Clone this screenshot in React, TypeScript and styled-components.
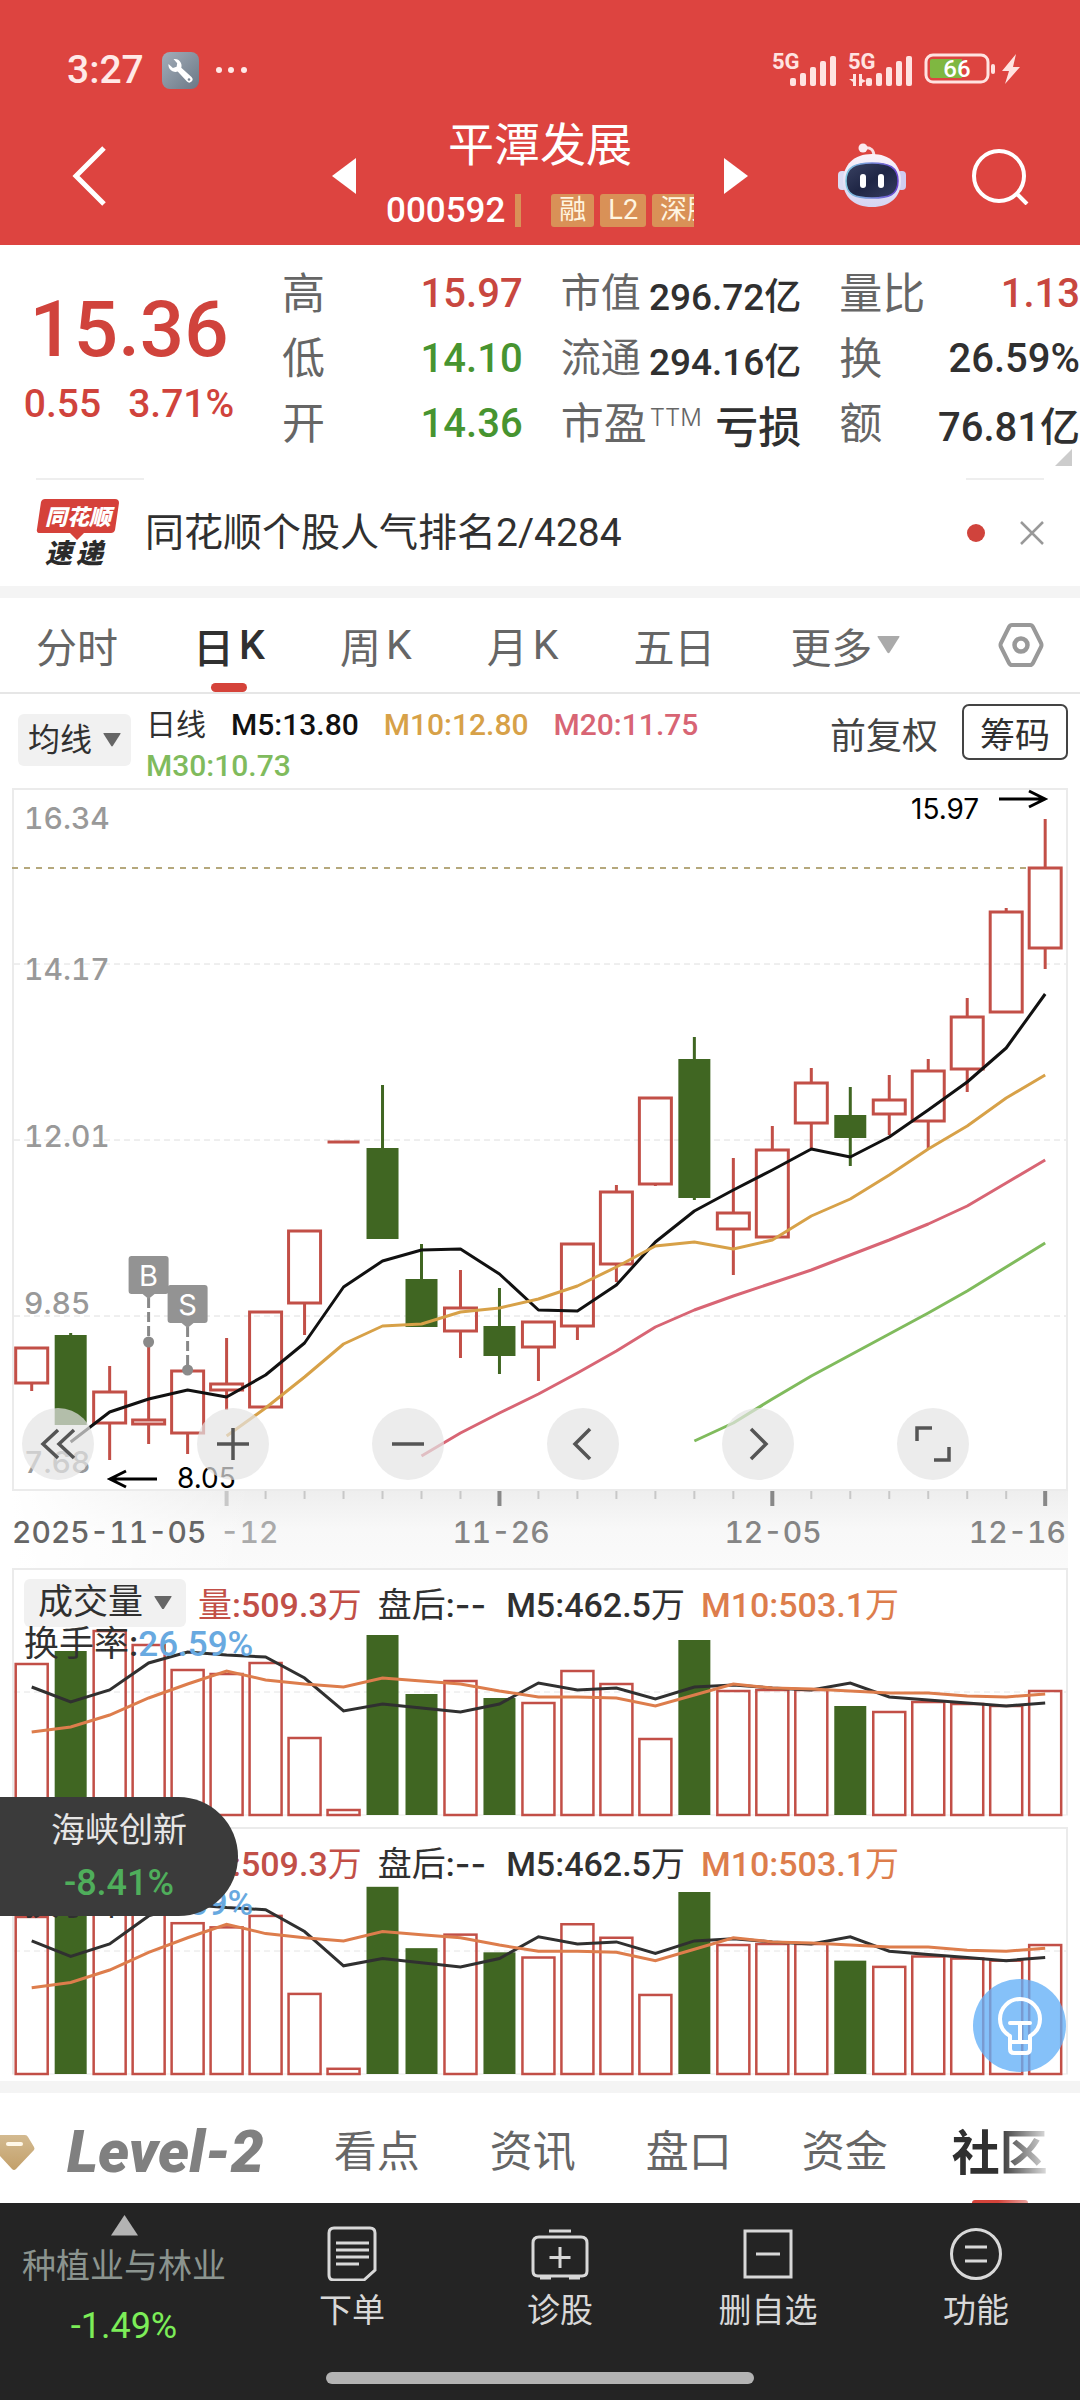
import React from "react";
import styled, { createGlobalStyle } from "styled-components";

const FONT = 'Roboto, "Noto Sans CJK SC", sans-serif';
const WIDE = 'Inter, "Noto Sans CJK SC", sans-serif';
const RED = "#d0433c";
const UP = "#c24f47";
const DOWN = "#406622";

const Global = createGlobalStyle`
  * { box-sizing: border-box; }
  body { margin: 0; background: #fff; font-family: ${FONT}; color: #303030; }
  button, select { font: inherit; color: inherit; background: none; border: 0; padding: 0; margin: 0; cursor: pointer; }
  h1, p, dl, dd, dt { margin: 0; font-weight: inherit; }
  svg { display: block; flex: none; }
`;

/* ---------- header ---------- */
const Header = styled.header`background: #dd4440; color: #fff; padding-bottom: 4px;`;
const StatusBar = styled.div`
  display: flex; align-items: center; height: 110px; padding: 30px 58px 0 67px; color: #ffe9e7;
`;
const Clock = styled.span`font-size: 39px; line-height: 48px; font-weight: 500; margin-right: 18px;`;
const Spacer = styled.span`flex: 1;`;
const StatusIcons = styled.div`display: flex; align-items: center; gap: 12px;`;
const StatusSvg = styled.svg`overflow: visible;`;

const NavBar = styled.nav`
  display: grid; grid-template-columns: 1fr 416px 1fr; align-items: center; height: 131px;
`;
const IconButton = styled.button`display: grid; place-items: center;`;
const NavLeft = styled.div`display: flex; padding-left: 71px;`;
const NavRight = styled.div`display: flex; justify-content: flex-end; align-items: center; gap: 64px; padding-right: 51px;`;
const TitleRow = styled.div`display: flex; align-items: center; justify-content: space-between;`;
const TitleBlock = styled.div`display: flex; flex-direction: column; align-items: center; width: 308px; overflow: hidden;`;
const StockName = styled.h1`font-size: 46px; line-height: 70px; font-weight: 400;`;
const CodeRow = styled.div`
  display: flex; align-items: center; gap: 6px; width: 100%; height: 61px; overflow: hidden; white-space: nowrap;
`;
const Code = styled.span`font-size: 35px; line-height: 40px; font-weight: 500; margin-right: 4px;`;
const Tag = styled.span`
  flex: none; padding: 0 8px; border-radius: 3px; background: #d99157; color: #fff5e0; font-size: 27px; line-height: 33px;
`;
const TagBar = styled.span`flex: none; width: 6px; height: 33px; margin-right: 24px; background: #d99157;`;

/* ---------- quote ---------- */
const Quote = styled.section`
  position: relative; display: grid; grid-template-columns: 244px repeat(3, 1fr); column-gap: 38px; padding: 16px 0 22px;
`;
const PriceBlock = styled.div`
  display: flex; flex-direction: column; align-items: center; padding: 31px 0 0 14px; color: ${RED}; font-weight: 500;
`;
const Price = styled.p`font-size: 78px; line-height: 76px;`;
const Change = styled.p`display: flex; gap: 27px; font-size: 39px; line-height: 48px; margin-top: 12px;`;
const Stats = styled.dl`display: block;`;
const Stat = styled.div`display: flex; align-items: center; justify-content: space-between; height: 65px; white-space: nowrap;`;
const StatLabel = styled.dt<{ $small?: boolean }>`
  display: flex; font-size: ${p => (p.$small ? 40 : 43)}px; line-height: 60px; color: #666;
`;
const Ttm = styled.sup`font-family: ${WIDE}; font-size: 24px; line-height: 48px; font-weight: 300; margin-left: 3px; vertical-align: top;`;
const StatValue = styled.dd<{ $tone?: string; $size?: number }>`
  font-size: ${p => p.$size || 40}px; font-weight: 500; color: ${p => p.$tone || "#303030"};
`;
const Corner = styled.span`
  position: absolute; right: 8px; bottom: 12px; width: 17px; height: 17px;
  background: #ccc; clip-path: polygon(100% 0, 100% 100%, 0 100%);
`;

/* ---------- news ---------- */
const NewsLines = styled.div`
  display: flex; justify-content: space-between; padding: 0 36px;
  &::before, &::after { content: ""; height: 2px; background: #eee; }
  &::before { width: 108px; }
  &::after { width: 78px; }
`;
const News = styled.section`display: flex; align-items: center; height: 106px; padding: 0 36px;`;
const NewsText = styled.a`flex: 1; margin-left: 25px; font-size: 39px; line-height: 48px; color: #303030; text-decoration: none;`;
const Dot = styled.span`width: 18px; height: 18px; border-radius: 50%; background: ${RED}; margin-right: 35px;`;
const Strip = styled.div`height: 12px; background: #f4f4f4;`;

/* ---------- period tabs ---------- */
const PeriodTabs = styled.nav`
  display: flex; align-items: center; gap: 75px; height: 96px; padding: 0 36px; border-bottom: 2px solid #e6e6e6;
`;
const PeriodTab = styled.button<{ $active?: boolean }>`
  display: flex; align-items: center; justify-content: center; gap: 5px; align-self: stretch; position: relative;
  font-size: 41px; color: ${p => (p.$active ? "#303030" : "#666")}; font-weight: ${p => (p.$active ? 500 : 400)};
  &::after {
    content: ""; display: ${p => (p.$active ? "block" : "none")}; position: absolute; bottom: 0; width: 36px; height: 9px;
    border-radius: 5px; background: #d5433a;
  }
`;
const Push = styled.div`margin-left: auto;`;

/* ---------- legend ---------- */
const Legend = styled.div`display: flex; align-items: flex-start; padding: 10px 12px 8px 18px; height: 94px;`;
const Picker = styled.label<{ $large?: boolean }>`
  display: flex; align-items: center; gap: 10px; border-radius: 6px; background: #f1f1f1;
  height: ${p => (p.$large ? 48 : 52)}px; padding: ${p => (p.$large ? "0 14px" : "0 10px")};
  margin-top: ${p => (p.$large ? 0 : 10)}px; font-size: ${p => (p.$large ? 35 : 32)}px;
  select { appearance: none; line-height: 44px; }
`;
const Averages = styled.p`
  flex: 1; display: flex; flex-wrap: wrap; column-gap: 25px; margin-left: 15px; font-size: 30px; line-height: 41px; font-weight: 500;
`;
const Tone = styled.span<{ $c: string }>`color: ${p => p.$c};`;
const PlainButton = styled.button`margin: 9px 24px 0 0; font-size: 36px; line-height: 48px; color: #444;`;
const BoxButton = styled.button`height: 56px; padding: 0 16px; border: 2px solid #444; border-radius: 7px; font-size: 35px;`;

/* ---------- charts ---------- */
const Charts = styled.main`position: relative; padding: 0 12px 5px;`;
const Stack = styled.section<{ $gap?: number }>`
  display: grid; margin-top: ${p => p.$gap || 0}px;
  > * { grid-area: 1 / 1; }
  svg { width: 100%; height: auto; }
`;
const ChartTools = styled.div`display: flex; align-items: flex-start; gap: 103px; padding: 620px 0 0 10px;`;
const RoundButton = styled.button`
  display: grid; place-items: center; width: 72px; height: 72px; border-radius: 50%; background: rgba(228, 228, 228, 0.7);
  svg { width: 40px; height: 40px; }
`;
const VolumeInfo = styled.div`padding: 10px 12px 0; font-size: 34px; font-weight: 500;`;
const VolumeRow = styled.div`
  display: flex; align-items: center; white-space: nowrap; font-weight: 500;
  label { font-weight: 400; margin-right: 12px; svg { width: 18px; } }
`;
const Figure = styled.span<{ $c: string; $gap?: number }>`color: ${p => p.$c}; margin-right: ${p => p.$gap || 0}px; font-weight: 500;`;
const Cjk = styled.span`font-weight: 400;`;
const Dashes = styled.span`font-family: ${WIDE};`;
const Turnover = styled.p`line-height: 36px; font-size: 35px;`;

const FloatingStock = styled.a`
  position: absolute; left: 0; top: 1009px; width: 238px; height: 119px; padding-top: 7px;
  display: flex; flex-direction: column; align-items: center;
  border-radius: 0 60px 60px 0; background: #3b3b3b; color: #e6e6e6; text-decoration: none;
  font-size: 34px; line-height: 53px;
`;
const FloatingChange = styled.span`font-size: 36px; font-weight: 500; color: #4fae5b;`;
const Bulb = styled.button`
  position: absolute; right: 14px; bottom: 9px; width: 93px; height: 93px; border-radius: 50%;
  display: grid; place-items: center; background: rgba(99, 175, 247, 0.78);
`;

/* ---------- info tabs ---------- */
const InfoTabs = styled.nav`
  display: flex; align-items: center; gap: 70px; height: 110px; padding-top: 8px; overflow: hidden; white-space: nowrap;
`;
const LevelTab = styled.button`
  display: flex; align-items: center; gap: 32px; color: #808080; font-size: 59px; font-weight: 900; font-style: italic; line-height: 60px;
`;
const InfoTab = styled.button`font-size: 43px; line-height: 56px; color: #666;`;
const ActiveInfo = styled.button`
  align-self: stretch; display: flex; flex-direction: column; align-items: center; justify-content: space-between; margin-left: -6px;
  font-size: 48px; line-height: 70px; font-weight: 700; padding-top: 18px;
  mask-image: linear-gradient(90deg, #000 48%, rgba(0, 0, 0, 0.15) 100%);
  &::after { content: ""; width: 56px; height: 3px; border-radius: 6px 6px 0 0; background: #d5433a; }
`;

/* ---------- bottom bar ---------- */
const Footer = styled.footer`background: #242424; color: #d8d8d8;`;
const Actions = styled.div`display: grid; grid-template-columns: 248px repeat(4, 1fr); height: 169px;`;
const Sector = styled.a`
  display: flex; flex-direction: column; align-items: center; padding-top: 12px; color: #8b948f; text-decoration: none;
  font-size: 34px; line-height: 40px;
`;
const SectorName = styled.span`margin: 10px 0 20px;`;
const SectorChange = styled.span`font-size: 36px; color: #7ced58;`;
const Action = styled.button`
  display: flex; flex-direction: column; align-items: center; gap: 10px; padding-top: 22px; font-size: 33px; line-height: 40px;
`;
const HomeBar = styled.div`width: 428px; height: 12px; margin: 0 auto; border-radius: 6px; background: #b3b3b3;`;
const Bottom = styled.div`height: 28px; padding-bottom: 16px;`;

/* ---------- data ---------- */
type Candle = [number, number, number, number, boolean?];
const CANDLES: Candle[] = [
  [560, 560, 595, 603], [545, 547, 637, 637, true], [578, 604, 635, 672], [554, 632, 636, 656], [582, 583, 645, 666],
  [550, 596, 602, 622], [523, 524, 619, 619], [443, 443, 515, 547], [354, 354, 354, 354], [297, 360, 451, 451, true],
  [456, 491, 539, 539, true], [482, 520, 543, 570], [500, 538, 568, 586, true], [534, 534, 559, 593], [456, 456, 538, 552],
  [397, 404, 476, 494], [310, 310, 396, 398], [249, 271, 410, 412, true], [370, 425, 441, 487], [338, 362, 449, 449],
  [280, 295, 335, 360], [299, 327, 350, 378, true], [287, 312, 326, 347], [271, 283, 333, 361], [210, 229, 281, 304],
  [120, 124, 224, 225], [31, 80, 160, 181],
];
const LINES = [
  { from: 1, c: "#111", v: [654, 624, 611, 602, 609, 587, 555, 499, 473, 462, 461, 486, 522, 523, 497, 454, 423, 402, 382, 361, 369, 349, 322, 294, 260, 206] },
  { from: 5, c: "#d7a148", v: [648, 620, 589, 556, 538, 536, 524, 520, 511, 498, 479, 458, 454, 461, 452, 428, 411, 387, 361, 338, 310, 287] },
  { from: 10, c: "#d86574", v: [668, 645, 625, 606, 585, 563, 539, 522, 508, 495, 482, 467, 452, 436, 418, 395, 372] },
  { from: 17, c: "#80bb5d", v: [653, 635, 611, 588, 567, 546, 525, 503, 479, 455] },
];
const VOLUME = [96, 83, 63, 77, 102, 106, 95, 170, 242, 67, 126, 113, 130, 135, 103, 116, 171, 72, 123, 122, 122, 138, 144, 134, 136, 138, 123];
const VOL5 = [119, 134, 122, 95, 84, 87, 89, 110, 143, 136, 140, 144, 136, 115, 122, 120, 131, 119, 117, 120, 122, 115, 129, 132, 135, 138, 135];
const VOL10 = [164, 159, 147, 130, 116, 103, 112, 116, 119, 110, 113, 116, 123, 129, 129, 130, 138, 127, 116, 120, 121, 123, 125, 125, 128, 129, 126];
const cx = (i: number) => 19.7 + 38.98 * i;
const points = (v: number[], from = 0) => v.map((y, i) => `${cx(i + from)},${y}`).join(" ");

const Triangle = ({ w = 18, c = "#666", d = "down" }: { w?: number; c?: string; d?: string }) => (
  <svg width={w} height={w * 0.76} viewBox="0 0 20 16" preserveAspectRatio="none" aria-hidden="true">
    <path d={d === "down" ? "M1 0h18q1 0 .5 1L11 15q-1 1.500-2 0L.5 1Q0 0 1 0z" : "M0 16L10 0l10 16z"} fill={c} />
  </svg>
);

const Signal = ({ data }: { data?: boolean }) => (
  <StatusSvg width="64" height="36" viewBox="0 0 64 36" aria-hidden="true" fill="#ffe3e1">
    <text x="0" y="17" fontSize="22" fontWeight="700" fontFamily="Roboto, sans-serif">5G</text>
    {[8, 13, 19, 25, 30].map((h, i) => <rect key={i} x={18 + i * 10} y={34 - h} width="6" height={h} rx="2" />)}
    {data && <path d="M8 22v12H5v-4l-4-3h4v-5zM11 22h3v5l4 2-4 2v3h-3z" />}
  </StatusSvg>
);

const Wrench = () => (
  <svg width="37" height="37" viewBox="0 0 37 37" aria-hidden="true">
    <defs><linearGradient id="tool" x1="0" y1="0" x2="1" y2="1"><stop offset="0" stopColor="#a3adb9" /><stop offset="1" stopColor="#6b7886" /></linearGradient></defs>
    <rect width="37" height="37" rx="8" fill="url(#tool)" />
    <path d="M11.500 7a7 7 0 0 1 7.800 8.800L29.500 25a3.200 3.200 0 1 1-4.500 4.600l-9.300-10A7 7 0 0 1 6.500 12l4.400 4 3.700-1.300.6-3.500z" fill="#fff" />
    <circle cx="27" cy="27.500" r="1.300" fill="#7b8794" />
  </svg>
);

const Battery = () => (
  <svg width="98" height="36" viewBox="0 0 98 36" aria-hidden="true">
    <rect x="2" y="3" width="62" height="27" rx="7" fill="none" stroke="#ffe3e1" strokeWidth="3" />
    <path d="M8 7h30v19H8a2 2 0 0 1-2-2V9a2 2 0 0 1 2-2z" fill="#7fb741" />
    <rect x="67" y="12" width="4" height="10" rx="2" fill="#ffe3e1" />
    <text x="33" y="25" fontSize="24" fontWeight="500" fontFamily="Roboto, sans-serif" textAnchor="middle" fill="#fff">66</text>
    <path d="M92 2L78 19h7l-4 13 15-17h-7z" fill="#ffe3e1" />
  </svg>
);

const Robot = () => (
  <svg width="70" height="66" viewBox="0 0 70 66" aria-hidden="true">
    <defs>
      <linearGradient id="shell" x1="0" y1="0" x2="0" y2="1"><stop offset="0" stopColor="#fbf3fa" /><stop offset="1" stopColor="#d5d4f2" /></linearGradient>
      <linearGradient id="visor" x1="0" y1="0" x2="1" y2="1"><stop offset="0" stopColor="#3a4263" /><stop offset=".5" stopColor="#1f2645" /><stop offset="1" stopColor="#353d60" /></linearGradient>
      <linearGradient id="rim" x1="0" y1="0" x2="1" y2="0"><stop offset="0" stopColor="#7fc8e0" /><stop offset="1" stopColor="#6a45cf" /></linearGradient>
    </defs>
    <path d="M27 5c7-1 10 2 10 9" fill="none" stroke="#f7dfe4" strokeWidth="3" />
    <circle cx="26" cy="5" r="4.500" fill="#fbeaf0" />
    <rect x="1" y="28" width="9" height="19" rx="4" fill="#dcdcf4" /><rect x="60" y="28" width="9" height="19" rx="4" fill="#cfcdf0" />
    <path d="M35 11c18 0 29 11 29 27S53 64 35 64 6 54 6 38s11-27 29-27z" fill="url(#shell)" />
    <path d="M35 20c17 0 26 4 26 18S52 55 35 55 9 52 9 38s9-18 26-18z" fill="url(#visor)" stroke="url(#rim)" strokeWidth="1.500" />
    <rect x="23" y="31" width="6" height="14" rx="3" fill="#fff" /><rect x="41" y="31" width="6" height="14" rx="3" fill="#fff" />
  </svg>
);

const LogoSvg = styled.svg`overflow: visible; font-family: "Noto Sans CJK SC", sans-serif; font-weight: 900;`;
const ExpressLogo = () => (
  <LogoSvg width="84" height="70" viewBox="0 0 84 70" role="img" aria-label="同花顺速递">
    <path d="M9 1h70q4 0 4 4l-4 27q-1 3-4 3H48l-7 7-7-7H4q-4 0-3-4L5 4q1-3 4-3z" fill="#d5413a" />
    <g fontStyle="italic"><text x="9" y="27" fontSize="22" fill="#fff">同花顺</text>
      <text x="9" y="65" fontSize="27" fill="#2b2b2b">速</text><text x="40" y="65" fontSize="27" fill="#2b2b2b">递</text></g>
  </LogoSvg>
);

const Marker = ({ x, y, to, t }: { x: number; y: number; to: number; t: string }) => (
  <g>
    <path d={`M${x} ${y + 42}V${to}`} stroke="#888" strokeWidth="3" strokeDasharray="10 4" />
    <circle cx={x} cy={to} r="5.500" fill="#8a8a8a" />
    <path d={`M${x - 17} ${y}h34q3 0 3 3v32q0 3-3 3h-11l-6 5-6-5h-11q-3 0-3-3v-32q0-3 3-3z`} fill="#939393" />
    <text x={x} y={y + 30} fontSize="29" textAnchor="middle" fill="#fff" fontFamily={WIDE}>{t}</text>
  </g>
);

const TabularText = styled.g`font-family: ${WIDE}; font-size: 30px; font-weight: 500; font-variant-numeric: tabular-nums;`;
const AXIS: [string, number][] = [["16.34", 41], ["14.17", 192], ["12.01", 359], ["9.85", 526], ["7.68", 685]];

const KChart = () => (
  <svg viewBox="0 0 1056 780" role="img" aria-label="日K线图">
    <defs>
      <linearGradient id="fade" x1="0" y1="0" x2="0" y2="1"><stop offset="0" stopColor="#eee" /><stop offset=".5" stopColor="#f8f8f8" /><stop offset="1" stopColor="#fafafa" /></linearGradient>
      <linearGradient id="fadeLeft" x1="0" y1="0" x2="1" y2="0"><stop offset="0" stopColor="#fff" /><stop offset="1" stopColor="#fff" stopOpacity="0" /></linearGradient>
    </defs>
    <rect x="0" y="702" width="1056" height="78" fill="url(#fade)" />
    <rect x="0" y="702" width="240" height="78" fill="url(#fadeLeft)" />
    <rect x="1" y="1" width="1054" height="701" fill="#fff" stroke="#ebebeb" strokeWidth="2" />
    {[176, 352, 528].map(y => <path key={y} d={`M2 ${y}H1054`} stroke="#dedede" strokeDasharray="6 4" />)}
    <path d="M0 80H1020" stroke="#b5a87c" strokeWidth="2" strokeDasharray="6 6" />
    <TabularText fill="#999">
      {AXIS.map(([t, y]) => <text key={t} x="12" y={y}>{t}</text>)}
    </TabularText>
    {CANDLES.map(([h, t, b, l, down], i) => {
      const x = cx(i);
      if (down) return <g key={i} fill={DOWN}><rect x={x - 1.5} y={h} width="3" height={l - h} /><rect x={x - 16} y={t} width="32" height={b - t} /></g>;
      return (
        <g key={i} stroke={UP} strokeWidth="3" fill="none">
          {t === b ? <path d={`M${x - 16} ${t}h32`} /> : <rect x={x - 16} y={t} width="32" height={b - t} />}
          <path d={`M${x} ${h}V${t}M${x} ${b}V${l}`} />
        </g>
      );
    })}
    {LINES.map(l => <polyline key={l.c} points={points(l.v, l.from)} fill="none" stroke={l.c} strokeWidth="3" strokeLinejoin="round" />)}
    <Marker x={136.6} y={468} to={554} t="B" />
    <Marker x={175.6} y={497} to={582} t="S" />
    <g stroke="#000" strokeWidth="3" fill="none">
      <path d="M987 11H1033M1017 3l16 8-16 8" /><path d="M145 691H98M114 683l-16 8 16 8" />
    </g>
    <g fontFamily={WIDE} fontSize="28" fill="#000"><text x="899" y="31">15.97</text><text x="165" y="700">8.05</text></g>
    {CANDLES.map((_, i) => i < 5 ? null : (
      <rect key={i} x={cx(i) - (i % 7 === 5 ? 2 : 1)} y="703" width={i % 7 === 5 ? 4 : 2} height={i % 7 === 5 ? 15 : 8} fill={i % 7 === 5 && i > 5 ? "#888" : "#c8c8c8"} />
    ))}
    <TabularText fill="#858585">
      <text x="0" y="755" fill="#666">2025-11-05</text>
      <text x="208" y="755" fill="#aaa">-12</text>
      <text x="489" y="755" textAnchor="middle">11-26</text>
      <text x="761" y="755" textAnchor="middle">12-05</text>
      <text x="1054" y="755" textAnchor="end">12-16</text>
    </TabularText>
  </svg>
);

const VolumeChart = ({ k }: { k: number }) => {
  const y = (v: number) => 247 - (247 - v) * k;
  return (
    <svg viewBox="0 0 1056 249" role="img" aria-label="成交量图">
      <path d="M1 247V1H1055V247" fill="none" stroke="#ebebeb" strokeWidth="2" />
      <path d="M0 247H1056" stroke="#ebebeb" /><path d="M2 124H1054" stroke="#e4e4e4" strokeDasharray="6 4" />
      {VOLUME.map((v, i) => CANDLES[i][4]
        ? <rect key={i} x={cx(i) - 16} y={y(v)} width="32" height={247 - y(v)} fill={DOWN} />
        : <rect key={i} x={cx(i) - 16} y={y(v)} width="32" height={247 - y(v)} fill="none" stroke={UP} strokeWidth="2.500" />)}
      <polyline points={points(VOL5.map(y))} fill="none" stroke="#303030" strokeWidth="3" />
      <polyline points={points(VOL10.map(y))} fill="none" stroke="#dd7d4c" strokeWidth="3" />
    </svg>
  );
};

const VolumePanel = ({ k, id, gap }: { k: number; id: string; gap?: number }) => (
  <Stack $gap={gap}>
    <VolumeChart k={k} />
    <VolumeInfo>
      <VolumeRow>
        <Picker $large htmlFor={id}><select id={id} aria-label="指标"><option>成交量</option></select><Triangle /></Picker>
        <Figure $c={UP} $gap={16}><Cjk>量</Cjk>:509.3<Cjk>万</Cjk></Figure>
        <Figure $c="#303030" $gap={20}><Cjk>盘后</Cjk>:<Dashes>--</Dashes></Figure>
        <Figure $c="#303030" $gap={16}>M5:462.5<Cjk>万</Cjk></Figure>
        <Figure $c="#dd7d4c">M10:503.1<Cjk>万</Cjk></Figure>
      </VolumeRow>
      <Turnover><Cjk>换手率</Cjk>:<Tone $c="#68a9e0">26.59%</Tone></Turnover>
    </VolumeInfo>
  </Stack>
);

const STATS = [
  [["高", "15.97", "#c8473f"], ["低", "14.10", "#479430"], ["开", "14.36", "#479430"]],
  [["市值", "296.72亿"], ["流通", "294.16亿"], ["市盈", "亏损"]],
  [["量比", "1.13", "#c8473f"], ["换", "26.59%"], ["额", "76.81亿"]],
];
const TOOLS: [string, string][] = [
  ["快退", "M20 6L5 20l15 14M36 6L21 20l15 14"], ["放大", "M20 4v32M4 20h32"], ["缩小", "M4 20h32"],
  ["左移", "M27 5L12 20l15 15"], ["右移", "M13 5l15 15-15 15"], ["全屏", "M4 17V4h15M36 23v13H21"],
];

export default function App() {
  return (
    <>
      <Global />
      <Header>
        <StatusBar>
          <Clock>3:27</Clock><Wrench />
          <svg width="50" height="36" viewBox="0 0 50 36" fill="#ffe9e7" aria-hidden="true"><circle cx="20" cy="18" r="3" /><circle cx="32" cy="18" r="3" /><circle cx="45" cy="18" r="3" /></svg>
          <Spacer />
          <StatusIcons><Signal /><Signal data /><Battery /></StatusIcons>
        </StatusBar>
        <NavBar>
          <NavLeft><IconButton aria-label="返回"><svg width="36" height="62" viewBox="0 0 36 62"><path d="M33 3L5 31l28 28" fill="none" stroke="#fff" strokeWidth="5" /></svg></IconButton></NavLeft>
          <TitleRow>
            <IconButton aria-label="上一只"><svg width="24" height="36" viewBox="0 0 24 36"><path d="M24 0v36L0 18z" fill="#fff" /></svg></IconButton>
            <TitleBlock>
              <StockName>平潭发展</StockName>
              <CodeRow><Code>000592</Code><TagBar /><Tag>融</Tag><Tag>L2</Tag><Tag>深股</Tag></CodeRow>
            </TitleBlock>
            <IconButton aria-label="下一只"><svg width="24" height="36" viewBox="0 0 24 36"><path d="M0 0v36l24-18z" fill="#fff" /></svg></IconButton>
          </TitleRow>
          <NavRight>
            <IconButton aria-label="智能助手"><Robot /></IconButton>
            <IconButton aria-label="搜索"><svg width="58" height="58" viewBox="0 0 58 58" fill="none" stroke="#fff" strokeWidth="4"><circle cx="28" cy="29" r="25" /><path d="M46 47l10 10" /></svg></IconButton>
          </NavRight>
        </NavBar>
      </Header>

      <Quote>
        <PriceBlock>
          <Price>15.36</Price>
          <Change><span>0.55</span><span>3.71%</span></Change>
        </PriceBlock>
        {STATS.map((col, c) => (
          <Stats key={c}>
            {col.map(([label, value, tone]) => (
              <Stat key={label}>
                <StatLabel $small={c === 1 && label !== "市盈"}>{label}{label === "市盈" && <Ttm>TTM</Ttm>}</StatLabel>
                <StatValue $tone={tone} $size={value === "亏损" ? 43 : c === 1 ? 37 : 40}>{value}</StatValue>
              </Stat>
            ))}
          </Stats>
        ))}
        <Corner />
      </Quote>
      <NewsLines />
      <News>
        <ExpressLogo />
        <NewsText href="#news">同花顺个股人气排名2/4284</NewsText>
        <Dot />
        <IconButton aria-label="关闭"><svg width="24" height="24" viewBox="0 0 24 24"><path d="M1 1l22 22M23 1L1 23" stroke="#999" strokeWidth="2.500" /></svg></IconButton>
      </News>
      <Strip />

      <PeriodTabs>
        <PeriodTab>分时</PeriodTab>
        <PeriodTab $active>日<span>K</span></PeriodTab>
        <PeriodTab>周<span>K</span></PeriodTab>
        <PeriodTab>月<span>K</span></PeriodTab>
        <PeriodTab>五日</PeriodTab>
        <PeriodTab aria-haspopup="menu">更多<Triangle w={23} c="#aaa" /></PeriodTab>
        <Push>
          <IconButton aria-label="图表设置"><svg width="46" height="44" viewBox="0 0 46 44" fill="none" stroke="#999"><path d="M14 2h18q2 0 3 2l8 16q1 2 0 4l-8 16q-1 2-3 2H14q-2 0-3-2L3 24q-1-2 0-4l8-16q1-2 3-2z" strokeWidth="4" /><circle cx="23" cy="22" r="6.500" strokeWidth="4.500" /></svg></IconButton>
        </Push>
      </PeriodTabs>

      <Legend>
        <Picker htmlFor="avg"><select id="avg" aria-label="主图指标"><option>均线</option></select><Triangle /></Picker>
        <Averages>
          <Cjk>日线</Cjk><Tone $c="#111">M5:13.80</Tone><Tone $c="#d7a148">M10:12.80</Tone><Tone $c="#d86574">M20:11.75</Tone><Tone $c="#80bb5d">M30:10.73</Tone>
        </Averages>
        <PlainButton>前复权</PlainButton>
        <BoxButton>筹码</BoxButton>
      </Legend>

      <Charts>
        <Stack>
          <KChart />
          <ChartTools>
            {TOOLS.map(([name, d]) => (
              <RoundButton key={name} aria-label={name}><svg viewBox="0 0 40 40" fill="none" stroke="#555" strokeWidth="3.500"><path d={d} /></svg></RoundButton>
            ))}
          </ChartTools>
        </Stack>
        <VolumePanel k={1} id="vol1" />
        <VolumePanel k={1.04} id="vol2" gap={10} />
        <FloatingStock href="#related"><span>海峡创新</span><FloatingChange>-8.41%</FloatingChange></FloatingStock>
        <Bulb aria-label="提示">
          <svg width="46" height="60" viewBox="0 0 46 60" fill="none" stroke="#fff" strokeWidth="4" strokeLinecap="round" strokeLinejoin="round"><path d="M13 46V40C6 36 3 30 3 23a20 20 0 0 1 40 0c0 7-3 13-10 17v13q0 4-4 4H17q-4 0-4-4v-7h20M13 27h20M23 27v18" /></svg>
        </Bulb>
      </Charts>
      <Strip />

      <InfoTabs>
        <LevelTab>
          <svg width="35" height="40" viewBox="0 0 35 40" aria-hidden="true"><defs><linearGradient id="gem" x1="0" y1="0" x2="0" y2="1"><stop offset="0" stopColor="#d3ba90" /><stop offset="1" stopColor="#c3a06a" /></linearGradient></defs><path d="M0 3h25q2 0 3 2l6 10q1 2 0 3L16 37q-2 2-4 0L0 24z" fill="url(#gem)" /><path d="M8 12h13" stroke="#fff8e8" strokeWidth="4" strokeLinecap="round" /></svg>
          Level-2
        </LevelTab>
        <InfoTab>看点</InfoTab><InfoTab>资讯</InfoTab><InfoTab>盘口</InfoTab><InfoTab>资金</InfoTab>
        <ActiveInfo>社区</ActiveInfo>
      </InfoTabs>

      <Footer>
        <Actions>
          <Sector href="#sector">
            <Triangle w={27} c="#b3b3b3" d="up" />
            <SectorName>种植业与林业</SectorName>
            <SectorChange>-1.49%</SectorChange>
          </Sector>
          <Action><svg width="56" height="56" viewBox="0 0 56 56" fill="none" stroke="#d8d8d8" strokeWidth="3"><path d="M10 3h36q5 0 5 5v37L40 55H10q-5 0-5-5V8q0-5 5-5zM12 18h33M12 25h33M12 32h33M12 39h23" /></svg>下单</Action>
          <Action><svg width="58" height="56" viewBox="0 0 58 56" fill="none" stroke="#d8d8d8" strokeWidth="3"><path d="M18 6h22M8 12h42q6 0 6 6v28q0 5-5 5H7q-5 0-5-5V18q0-6 6-6zM29 22v21M18.500 32.500h21M9 53h11M38 53h11" /></svg>诊股</Action>
          <Action><svg width="56" height="56" viewBox="0 0 56 56" fill="none" stroke="#d8d8d8" strokeWidth="3"><path d="M5 6h46v46H5zM16 29h24" /></svg>删自选</Action>
          <Action><svg width="56" height="56" viewBox="0 0 56 56" fill="none" stroke="#d8d8d8" strokeWidth="3"><circle cx="28" cy="29" r="24.500" /><path d="M17 22h22M17 36h22" /></svg>功能</Action>
        </Actions>
        <Bottom><HomeBar /></Bottom>
      </Footer>
    </>
  );
}
